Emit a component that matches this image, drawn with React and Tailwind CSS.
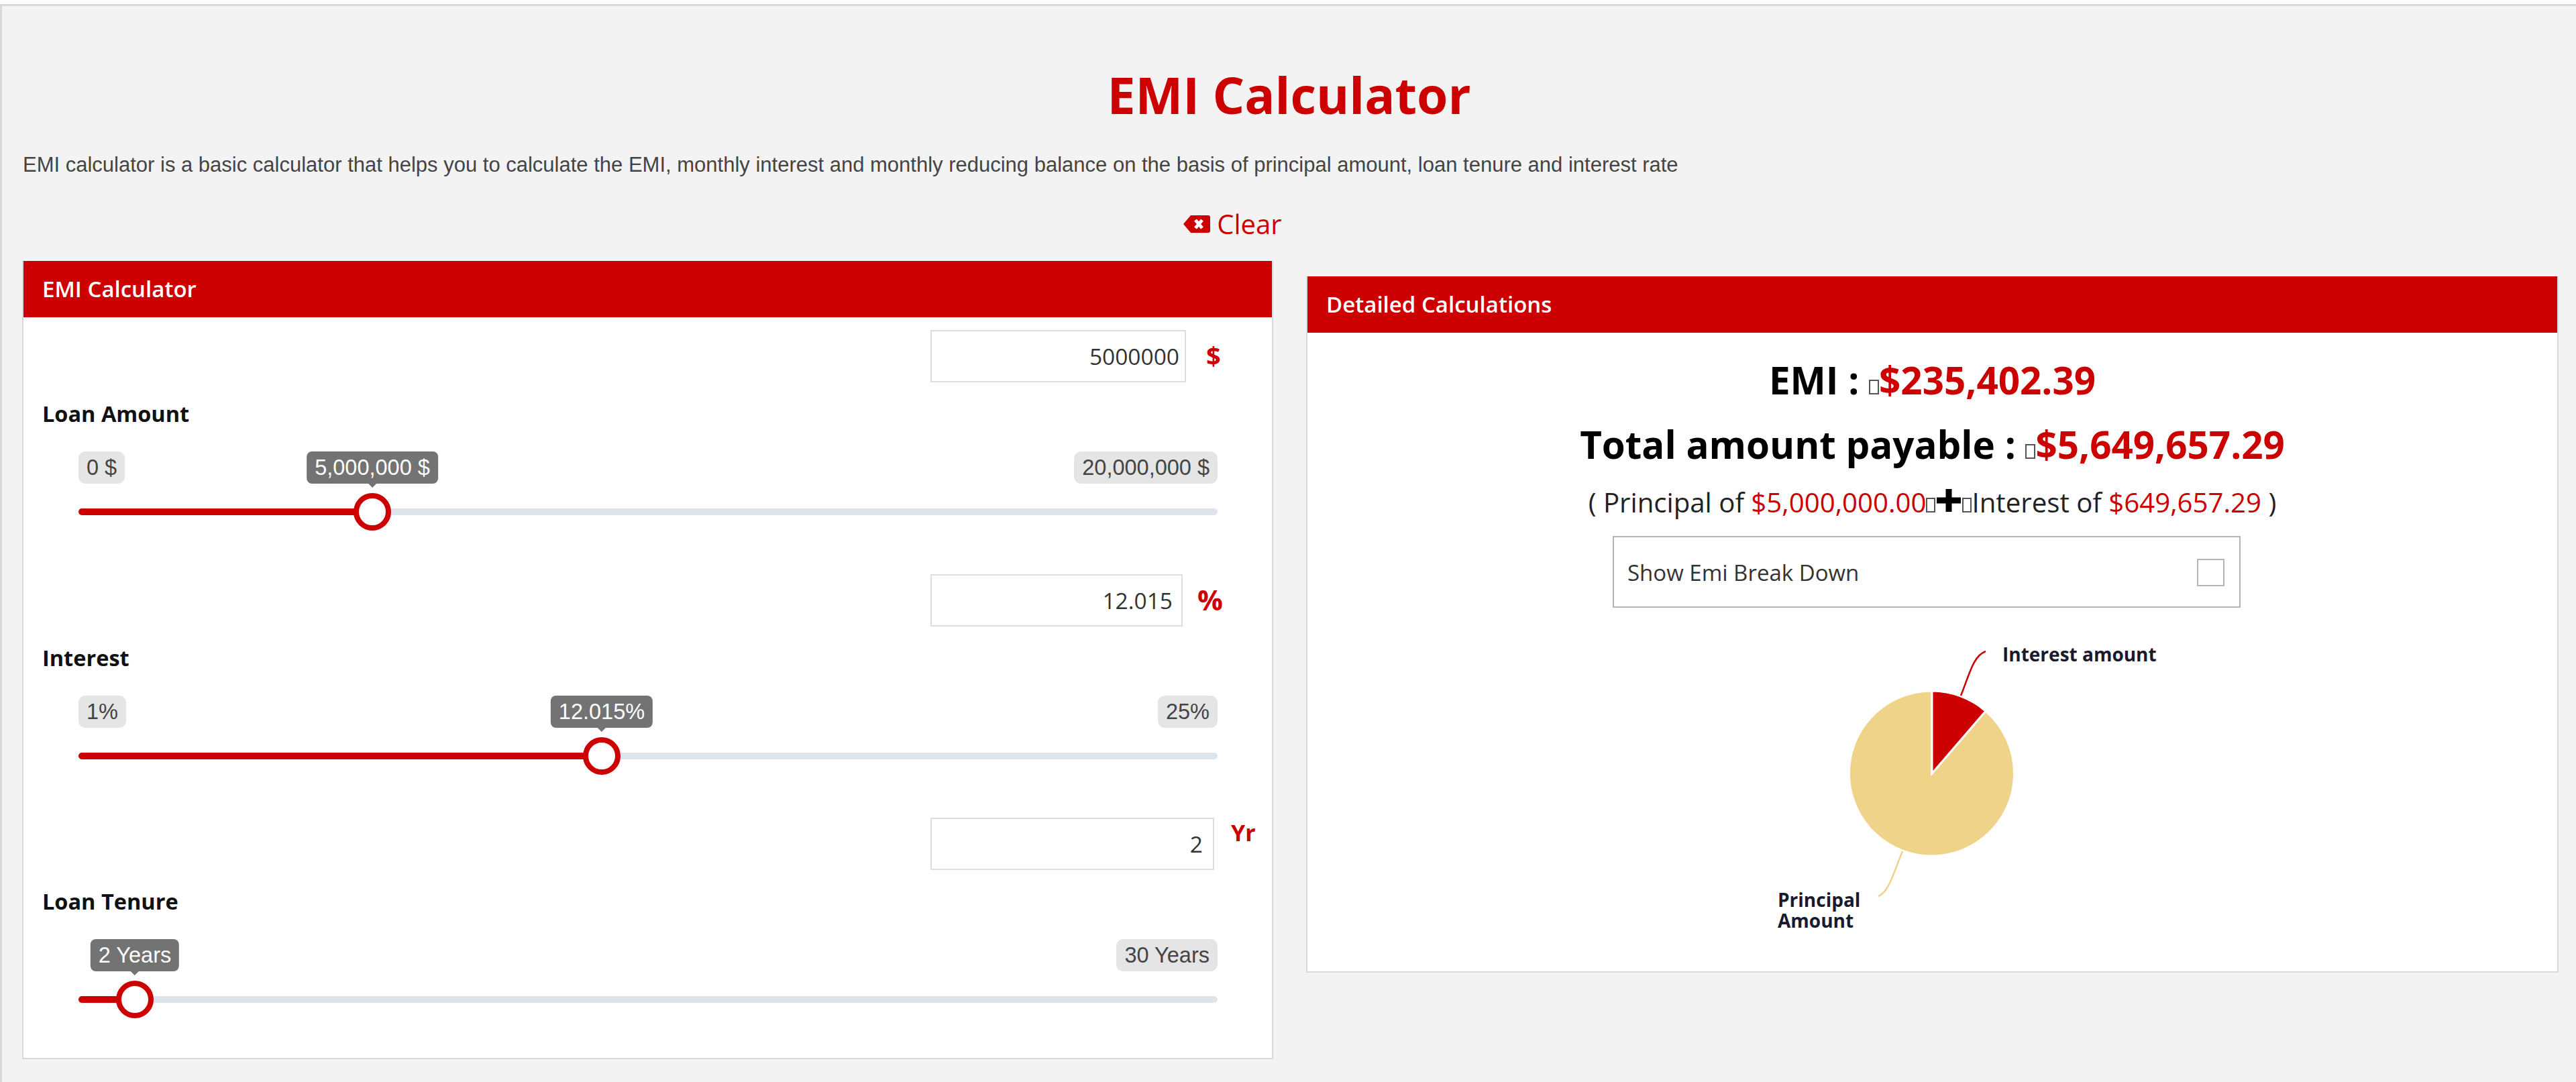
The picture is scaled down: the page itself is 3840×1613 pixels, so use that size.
const OS = "font-['Open_Sans','Noto_Sans',sans-serif]";

function Tofu({ cls }) {
  return <span className={"inline-block border-[2px] border-[#555] " + cls} />;
}

function Slider({ fillClass, thumbClass, tipClass, tip, min, max, showMin = true }) {
  return (
    <div className="relative h-[120px] w-[1698px] font-['Liberation_Sans',Arial,sans-serif] text-[32.5px] leading-[43px]">
      <div className="flex justify-between">
        <span className={"rounded-[10px] bg-[#e5e5e5] px-[12px] py-[2.5px] text-[#444] " + (showMin ? "" : "invisible")}>{min}</span>
        <span className="rounded-[10px] bg-[#e5e5e5] px-[12px] py-[2.5px] text-[#444]">{max}</span>
      </div>
      <span className={"absolute top-0 -translate-x-1/2 whitespace-nowrap rounded-[8px] bg-[#737373] px-[12px] py-[2.5px] text-white " + tipClass}>
        {tip}
        <span className="absolute left-1/2 top-full -ml-[6px] h-0 w-0 border-x-[6px] border-t-[6px] border-x-transparent border-t-[#737373]" />
      </span>
      <div className="absolute left-0 right-0 top-[85px] h-[10px] rounded-full bg-[#dee4ec]" />
      <div className={"absolute left-0 top-[85px] h-[10px] rounded-l-full bg-[#cc0000] " + fillClass} />
      <div className={"absolute top-[62px] h-[56px] w-[56px] -translate-x-1/2 rounded-full border-[8px] border-[#cc0000] bg-white " + thumbClass} />
    </div>
  );
}

function Field({ inputW, value, unit, unitClass, labelText, rowMt, inputPr }) {
  return (
    <div className={rowMt}>
      <div className="flex h-[78px] items-start pl-[1352px]">
        <div className={"flex h-[78px] items-center justify-end border-[2.5px] border-[#dedede] bg-white text-[33.5px] text-[#333] " + inputW + " " + inputPr}>
          {value}
        </div>
        <span className={"font-bold text-[#cc0000] " + unitClass}>{unit}</span>
      </div>
      <div className="mt-[27px] pl-[28px] text-[32.5px] font-bold leading-[40px] text-[#111]">{labelText}</div>
    </div>
  );
}

function PanelHead({ children }) {
  return (
    <div className="flex h-[84px] items-center bg-[#cc0000] pl-[28px] text-[33px] font-semibold text-white">
      {children}
    </div>
  );
}

export default function App() {
  return (
    <div className={"h-[1613px] w-[3840px] overflow-hidden bg-white pt-[6px] " + OS}>
      <div className="h-[1607px] border-l-[3px] border-t-[3px] border-[#d8d8d8] bg-[#f3f3f3]">
        <h1 className="pt-[82px] text-center text-[75px] font-bold leading-[100px] text-[#cc0000]">EMI Calculator</h1>
        <p className="mt-[35px] pl-[31px] font-['Liberation_Sans',Arial,sans-serif] text-[31px] leading-[40px] text-[#444]">
          EMI calculator is a basic calculator that helps you to calculate the EMI, monthly interest and monthly reducing balance on the basis of principal amount, loan tenure and interest rate
        </p>
        <div className="mt-[43px] flex h-[50px] items-center justify-center gap-[10px] pr-[168px] text-[40px] text-[#cc0000]">
          <svg width="40" height="26" viewBox="0 0 40 26">
            <path d="M11 0h26a3 3 0 0 1 3 3v20a3 3 0 0 1-3 3H11L0 13z" fill="#cc0000" />
            <path d="M18 7l10 12M28 7L18 19" stroke="#fff" strokeWidth="5" />
          </svg>
          <span>Clear</span>
        </div>
        <div className="mt-[30px] flex items-start pl-[30px]">
          {/* Left panel */}
          <div className="h-[1190px] w-[1865px] border-[2.5px] border-t-0 border-[#d9d9d9] bg-white">
            <PanelHead>EMI Calculator</PanelHead>
            <Field rowMt="mt-[19px]" value="5000000" inputW="w-[381px]" inputPr="pr-[8px]" unit="$" unitClass="ml-[30px] mt-[10px] text-[38px]" labelText="Loan Amount" />
            <div className="ml-[82px] mt-[36px]">
              <Slider min="0 $" max="20,000,000 $" tip="5,000,000 $" tipClass="left-[438px]" thumbClass="left-[438px]" fillClass="w-[438px]" />
            </div>
            <Field rowMt="mt-[63px]" value="12.015" inputW="w-[376px]" inputPr="pr-[13px]" unit="%" unitClass="ml-[22px] mt-[6px] text-[42px]" labelText="Interest" />
            <div className="ml-[82px] mt-[36px]">
              <Slider min="1%" max="25%" tip="12.015%" tipClass="left-[780px]" thumbClass="left-[780px]" fillClass="w-[780px]" />
            </div>
            <Field rowMt="mt-[62px]" value="2" inputW="w-[423px]" inputPr="pr-[15px]" unit="Yr" unitClass="ml-[25px] -mt-[3px] text-[34px]" labelText="Loan Tenure" />
            <div className="ml-[82px] mt-[36px]">
              <Slider showMin={false} min="2 Years" max="30 Years" tip="2 Years" tipClass="left-[84px]" thumbClass="left-[84px]" fillClass="w-[84px]" />
            </div>
          </div>
          {/* Right panel */}
          <div className="ml-[49px] mt-[23px] h-[1038px] w-[1867px] border-[2.5px] border-t-0 border-[#d9d9d9] bg-white">
            <PanelHead>Detailed Calculations</PanelHead>
            <div className="flex flex-col items-center">
              <div className="mt-[33px] flex items-baseline text-[56.5px] font-bold leading-[75px] text-black">
                <span className="whitespace-pre">EMI : </span>
                <Tofu cls="h-[22px] w-[15px]" />
                <span className="text-[#cc0000]">$235,402.39</span>
              </div>
              <div className="mt-[21px] flex items-baseline text-[56.5px] font-bold leading-[75px] text-black">
                <span className="whitespace-pre">Total amount payable : </span>
                <Tofu cls="h-[22px] w-[15px]" />
                <span className="text-[#cc0000]">$5,649,657.29</span>
              </div>
              <div className="mt-[21px] flex items-baseline text-[40.2px] leading-[56px] text-[#222]">
                <span className="whitespace-pre">( Principal of </span>
                <span className="text-[#cc0000]">$5,000,000.00</span>
                <Tofu cls="h-[22px] w-[14px]" />
                <svg width="38" height="36" viewBox="0 0 38 36" className="mx-[1px]">
                  <path d="M19 1v34M1 18h36" stroke="#000" strokeWidth="9" />
                </svg>
                <Tofu cls="h-[22px] w-[14px]" />
                <span className="whitespace-pre">Interest of </span>
                <span className="text-[#cc0000]">$649,657.29</span>
                <span className="whitespace-pre"> )</span>
              </div>
              <div className="ml-[455px] mt-[22px] flex h-[107px] w-[936px] items-center justify-between self-start border-[2px] border-[#b5b5b5] pl-[20px] pr-[22px] pt-[2px] text-[33px] text-[#333]">
                <span>Show Emi Break Down</span>
                <span className="h-[41px] w-[41px] border-[2px] border-[#b5b5b5]" />
              </div>
              <svg width="700" height="460" viewBox="2530 940 700 460" className="mt-[34px]">
                <path d="M2879 1153L2879 1030A123 123 0 1 0 2959 1060Z" fill="#efd388" stroke="#fff" strokeWidth="3" />
                <path d="M2879 1153L2879 1030A123 123 0 0 1 2959 1060Z" fill="#cc0000" stroke="#fff" strokeWidth="3" />
                <path d="M2922 1037C2935 1005 2940 978 2959 971" fill="none" stroke="#cc0000" strokeWidth="2.5" />
                <path d="M2835 1269C2822 1300 2815 1330 2799 1336" fill="none" stroke="#efd388" strokeWidth="2.5" />
                <text x="2984" y="986" fontSize="28" fontWeight="700" fill="#1a1a2e">Interest amount</text>
                <text x="2649" y="1352" fontSize="28" fontWeight="700" fill="#1a1a2e">Principal</text>
                <text x="2649" y="1383" fontSize="28" fontWeight="700" fill="#1a1a2e">Amount</text>
              </svg>
            </div>
          </div>
        </div>
      </div>
    </div>
  );
}
